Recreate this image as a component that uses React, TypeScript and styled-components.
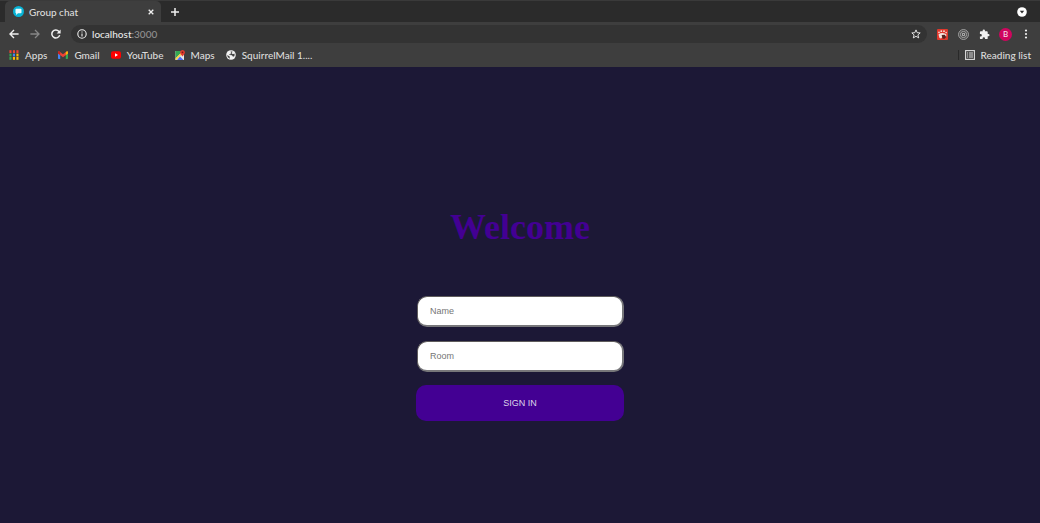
import React from "react";
import styled, { createGlobalStyle } from "styled-components";

const Global = createGlobalStyle`
  *, *::before, *::after { box-sizing: border-box; }
  body { margin: 0; background: #1c1836; }
  button, input { font: inherit; }
`;

const Window = styled.div`
  display: flex;
  flex-direction: column;
  min-height: 100vh;
  background: #1c1836;
  color: #dcdcdc;
  font: 500 10px/16px Lato, "Open Sans", sans-serif;
`;

const TabStrip = styled.header`
  display: flex;
  align-items: stretch;
  height: 22px;
  padding: 0 12px 0 5px;
  background: #2b2b2b;
  border-top: 1px solid #3a3a3a;
`;

const Tab = styled.div`
  display: flex;
  align-items: center;
  gap: 5px;
  width: 156px;
  padding: 0 6px 0 8px;
  background: #3e3e3e;
  border-radius: 5px 5px 0 0;
`;

const TabTitle = styled.span`
  flex: 1;
`;

const IconButton = styled.button<{ $size?: number }>`
  display: flex;
  align-items: center;
  justify-content: center;
  flex: none;
  width: ${({ $size = 12 }) => $size}px;
  height: ${({ $size = 12 }) => $size}px;
  padding: 0;
  border: 0;
  background: none;
  color: #f0f0f0;
  &:disabled { color: #878787; }
`;

const NewTab = styled(IconButton)`
  align-self: center;
  margin: 0 auto 0 8px;
`;

const TabSearch = styled(IconButton)`
  align-self: center;
`;

const Toolbar = styled.div`
  display: flex;
  align-items: center;
  gap: 9px;
  height: 24px;
  padding: 0 9px 0 8px;
  background: #3e3e3e;
`;

const AddressBar = styled.div`
  display: flex;
  align-items: center;
  flex: 1;
  gap: 5px;
  height: 18px;
  padding: 0 5px 0 6px;
  border-radius: 9px;
  background: #333333;
`;

const Address = styled.span`
  flex: 1;
  color: #909090;
  b { color: #e8e8e8; font-weight: 500; }
`;

const Actions = styled.div`
  display: flex;
  align-items: center;
  gap: 9px;
`;

const Avatar = styled.button`
  width: 13px;
  height: 13px;
  padding: 0;
  border: 0;
  border-radius: 50%;
  background: #d0055e;
  color: #f5d5e4;
  font-size: 8px;
  line-height: 13px;
`;

const Bookmarks = styled.nav`
  display: flex;
  align-items: center;
  gap: 11px;
  height: 21px;
  padding: 0 9px 3px;
  background: #3e3e3e;
`;

const Bookmark = styled.a`
  display: flex;
  align-items: center;
  gap: 6px;
  color: inherit;
  text-decoration: none;
  white-space: nowrap;
`;

const ReadingList = styled(Bookmark)`
  margin-left: auto;
  padding-left: 6px;
  border-left: 1px solid #292929;
  line-height: 10px;
`;

const Page = styled.main`
  display: flex;
  flex: 1;
  flex-direction: column;
  align-items: center;
  justify-content: center;
  font-family: "Liberation Sans", Arial, sans-serif;
`;

const Title = styled.h1`
  margin: 30px 0 41px;
  color: #430093;
  font: 700 36px/56px "Liberation Serif", serif;
`;

const Form = styled.form`
  display: flex;
  flex-direction: column;
  gap: 13px;
  width: 208px;
`;

const Fields = styled.div`
  display: flex;
  flex-direction: column;
  gap: 14px;
  padding-left: 1px;
`;

const Field = styled.input`
  height: 31px;
  margin: 0;
  padding: 0 12px;
  border: 1px solid #5f5c5c;
  border-right: 2px solid #77777a;
  border-bottom: 2px solid #77777a;
  border-radius: 10px;
  background: #ffffff;
  color: #222222;
  font-size: 9px;
  font-weight: 400;
  &::placeholder { color: #757575; opacity: 1; }
`;

const SignIn = styled.button`
  height: 36px;
  margin: 0;
  border: 0;
  border-radius: 10px;
  background: #430093;
  color: #ded5ea;
  font-size: 9px;
  font-weight: 400;
`;

const line = { fill: "none", stroke: "currentColor", strokeWidth: 1.5 };

const ChatLogo = () => (
  <svg width="11" height="11" viewBox="0 0 11 11" aria-hidden="true">
    <circle cx="5.5" cy="5.5" r="5.5" fill="#08b3d5" />
    <path d="M3.3 2.8h4.4q.8 0 .8.8v2.8q0 .8-.8.8H5L3.1 8.9V7.1q-.6-.1-.6-.7V3.6q0-.8.8-.8z" fill="#e6fbff" />
  </svg>
);

const appDots = ["#ea4335", "#ea4335", "#ea4335", "#34a853", "#4285f4", "#fbbc05", "#34a853", "#fbbc05", "#fbbc05"];

const AppsIcon = () => (
  <svg width="10" height="10" viewBox="0 0 10 10" aria-hidden="true">
    {appDots.map((fill, i) => (
      <rect key={i} x={(i % 3) * 3.5 + 0.4} y={Math.floor(i / 3) * 3.4 + 0.2} width="2.1" height="2.8" fill={fill} />
    ))}
  </svg>
);

const GmailIcon = () => (
  <svg width="10" height="10" viewBox="0 0 10 10" aria-hidden="true">
    <path d="M0 3h2.2v6H.7Q0 9 0 8.3z" fill="#4285f4" />
    <path d="M7.8 3H10v5.3q0 .7-.7.7H7.8z" fill="#34a853" />
    <path d="M0 2.5Q0 1 1.4 1.4L5 4.2l3.6-2.8Q10 1 10 2.5v1L5 7.2 0 3.5z" fill="#ea4335" />
    <path d="M7.8 2l.8-.6Q10 1 10 2.5v1L7.8 5z" fill="#fbbc05" />
    <path d="M0 2.5Q0 1 1.4 1.4l.8.6v3L0 3.5z" fill="#c5221f" />
  </svg>
);

const YouTubeIcon = () => (
  <svg width="10" height="10" viewBox="0 0 10 10" aria-hidden="true">
    <rect y="1.2" width="10" height="7.6" rx="2" fill="#ff0000" />
    <path d="M4 3.2v3.6L7 5z" fill="#fff" />
  </svg>
);

const MapsIcon = () => (
  <svg width="10" height="10" viewBox="0 0 10 10" aria-hidden="true">
    <path d="M.5 1H9v9H.5z" fill="#e6e6e6" />
    <path d="M.5 1H6v2L.5 8.500z" fill="#34a853" />
    <path d="M.5 8.300L6 3l1 1-5.500 6h-1z" fill="#fbd348" />
    <path d="M2 10l3-3.500L8.500 10z" fill="#4a6cf4" />
    <path d="M7.500 0Q10 .2 10 2.400 9.800 4 7.500 6.500 5.200 4 5 2.400 5.100.2 7.500 0z" fill="#e33b2e" />
    <circle cx="7.500" cy="2.300" r=".9" fill="#7b1b14" />
  </svg>
);

const GlobeIcon = () => (
  <svg width="10" height="10" viewBox="0 0 10 10" aria-hidden="true">
    <circle cx="5" cy="5" r="4.800" fill="#f1f1f1" />
    <path d="M1.200 5l2.500 1.500v2.200Q1.200 7.700 1.200 5zM4.500 1.500h2L6 2.800H4.700v1.400H3.400L3.200 5l2.800.2.8 1.400h1.300Q9.200 5 8.300 3.400L7 4.200 5.800 3.600" fill="#3e3e3e" />
  </svg>
);

const ListIcon = () => (
  <svg width="10" height="10" viewBox="0 0 10 10" aria-hidden="true">
    <rect x=".6" y=".6" width="8.800" height="8.800" {...line} strokeWidth="1.1" />
    <path d="M2 3h1.200M2 5h1.200M2 7h1.200M4 3h4M4 5h4M4 7h4" {...line} strokeWidth="1" />
  </svg>
);

const CloseIcon = () => (
  <svg width="6" height="6" viewBox="0 0 6 6"><path d="M.7.7l4.600 4.600M5.300.7L.7 5.300" {...line} strokeWidth="1.3" /></svg>
);
const PlusIcon = () => (
  <svg width="8" height="8" viewBox="0 0 8 8"><path d="M4 0v8M0 4h8" {...line} /></svg>
);
const SearchTabsIcon = () => (
  <svg width="10" height="10" viewBox="0 0 10 10"><circle cx="5" cy="5" r="4.800" fill="#fff" /><path d="M2.800 3.800h4.400L5 6.600z" fill="#2b2b2b" /></svg>
);
const BackIcon = () => (
  <svg width="10" height="10" viewBox="0 0 10 10"><path d="M9.600 5H1.200M5 1L1 5l4 4" {...line} strokeWidth="1.4" /></svg>
);
const ForwardIcon = () => (
  <svg width="10" height="10" viewBox="0 0 10 10"><path d="M.4 5h8.400M5 1l4 4-4 4" {...line} strokeWidth="1.3" /></svg>
);
const ReloadIcon = () => (
  <svg width="10" height="10" viewBox="0 0 10 10"><path d="M8.700 6.100A4 4 0 1 1 7.800 2.200L8.600 3" {...line} /><path d="M9.600.4v4H5.600z" fill="currentColor" /></svg>
);
const InfoIcon = () => (
  <svg width="10" height="10" viewBox="0 0 10 10"><circle cx="5" cy="5" r="4.200" {...line} strokeWidth="1.1" /><path d="M5 4.400v3M5 2.400v1.100" {...line} strokeWidth="1.1" /></svg>
);
const StarIcon = () => (
  <svg width="10" height="10" viewBox="0 0 10 10"><path d="M5 .9l1.200 2.800 3 .2-2.300 2 .8 3L5 7.300 2.300 8.900l.8-3-2.300-2 3-.2z" {...line} strokeWidth=".9" /></svg>
);
const PawIcon = () => (
  <svg width="11" height="11" viewBox="0 0 11 11">
    <rect width="11" height="11" rx="1" fill="#df382c" />
    <path d="M1.500 5.400Q3 4 5.500 4t4 1.700L9 8H7V6.500L4 9.500 2.500 9z" fill="#f4e3df" />
    <circle cx="2" cy="3.400" r=".8" fill="#f4e3df" /><circle cx="4.300" cy="2.200" r=".9" fill="#f4e3df" />
    <circle cx="7" cy="2.200" r=".9" fill="#f4e3df" /><circle cx="9.100" cy="3.600" r=".8" fill="#f4e3df" />
    <path d="M4.600 6l3.200-.2 1.400 2.200-1.600 1.800h-2z" fill="#572421" />
  </svg>
);
const TargetIcon = () => (
  <svg width="11" height="11" viewBox="0 0 11 11" fill="none" stroke="#b4b4b4">
    <circle cx="5.500" cy="5.500" r="4.900" strokeWidth=".9" /><circle cx="5.500" cy="5.500" r="3.100" strokeWidth=".9" />
    <circle cx="5.500" cy="5.500" r="1.200" strokeWidth="1.1" />
  </svg>
);
const PuzzleIcon = () => (
  <svg width="11" height="11" viewBox="0 0 24 24">
    <path fill="currentColor" d="M20.500 11H19V7a2 2 0 0 0-2-2h-4V3.500a2.500 2.500 0 0 0-5 0V5H4a2 2 0 0 0-2 2v3.800h1.500a2.700 2.700 0 0 1 0 5.400H2V20a2 2 0 0 0 2 2h3.800v-1.500a2.700 2.700 0 0 1 5.400 0V22H17a2 2 0 0 0 2-2v-4h1.500a2.500 2.500 0 0 0 0-5z" />
  </svg>
);
const MenuIcon = () => (
  <svg width="10" height="10" viewBox="0 0 10 10" fill="currentColor"><circle cx="5" cy="1.500" r="1.1" /><circle cx="5" cy="5" r="1.1" /><circle cx="5" cy="8.500" r="1.1" /></svg>
);

const bookmarks = [
  { label: "Apps", Icon: AppsIcon },
  { label: "Gmail", Icon: GmailIcon },
  { label: "YouTube", Icon: YouTubeIcon },
  { label: "Maps", Icon: MapsIcon },
  { label: "SquirrelMail 1....", Icon: GlobeIcon },
];

export default function App() {
  return (
    <Window>
      <Global />
      <TabStrip>
        <Tab>
          <ChatLogo />
          <TabTitle>Group chat</TabTitle>
          <IconButton $size={8} aria-label="Close tab"><CloseIcon /></IconButton>
        </Tab>
        <NewTab aria-label="New tab"><PlusIcon /></NewTab>
        <TabSearch aria-label="Search tabs"><SearchTabsIcon /></TabSearch>
      </TabStrip>
      <Toolbar>
        <IconButton aria-label="Back"><BackIcon /></IconButton>
        <IconButton aria-label="Forward" disabled><ForwardIcon /></IconButton>
        <IconButton aria-label="Reload"><ReloadIcon /></IconButton>
        <AddressBar>
          <IconButton $size={10} aria-label="Site information"><InfoIcon /></IconButton>
          <Address><b>localhost</b>:3000</Address>
          <IconButton aria-label="Bookmark this page"><StarIcon /></IconButton>
        </AddressBar>
        <Actions>
          <IconButton aria-label="Paw extension"><PawIcon /></IconButton>
          <IconButton aria-label="Target extension"><TargetIcon /></IconButton>
          <IconButton aria-label="Extensions"><PuzzleIcon /></IconButton>
          <Avatar aria-label="Profile B">B</Avatar>
          <IconButton $size={10} aria-label="Menu"><MenuIcon /></IconButton>
        </Actions>
      </Toolbar>
      <Bookmarks aria-label="Bookmarks">
        {bookmarks.map(({ label, Icon }) => (
          <Bookmark key={label} href="#"><Icon />{label}</Bookmark>
        ))}
        <ReadingList href="#"><ListIcon />Reading list</ReadingList>
      </Bookmarks>
      <Page>
        <Title>Welcome</Title>
        <Form onSubmit={(e) => e.preventDefault()}>
          <Fields>
            <Field aria-label="Name" placeholder="Name" />
            <Field aria-label="Room" placeholder="Room" />
          </Fields>
          <SignIn type="submit">SIGN IN</SignIn>
        </Form>
      </Page>
    </Window>
  );
}
